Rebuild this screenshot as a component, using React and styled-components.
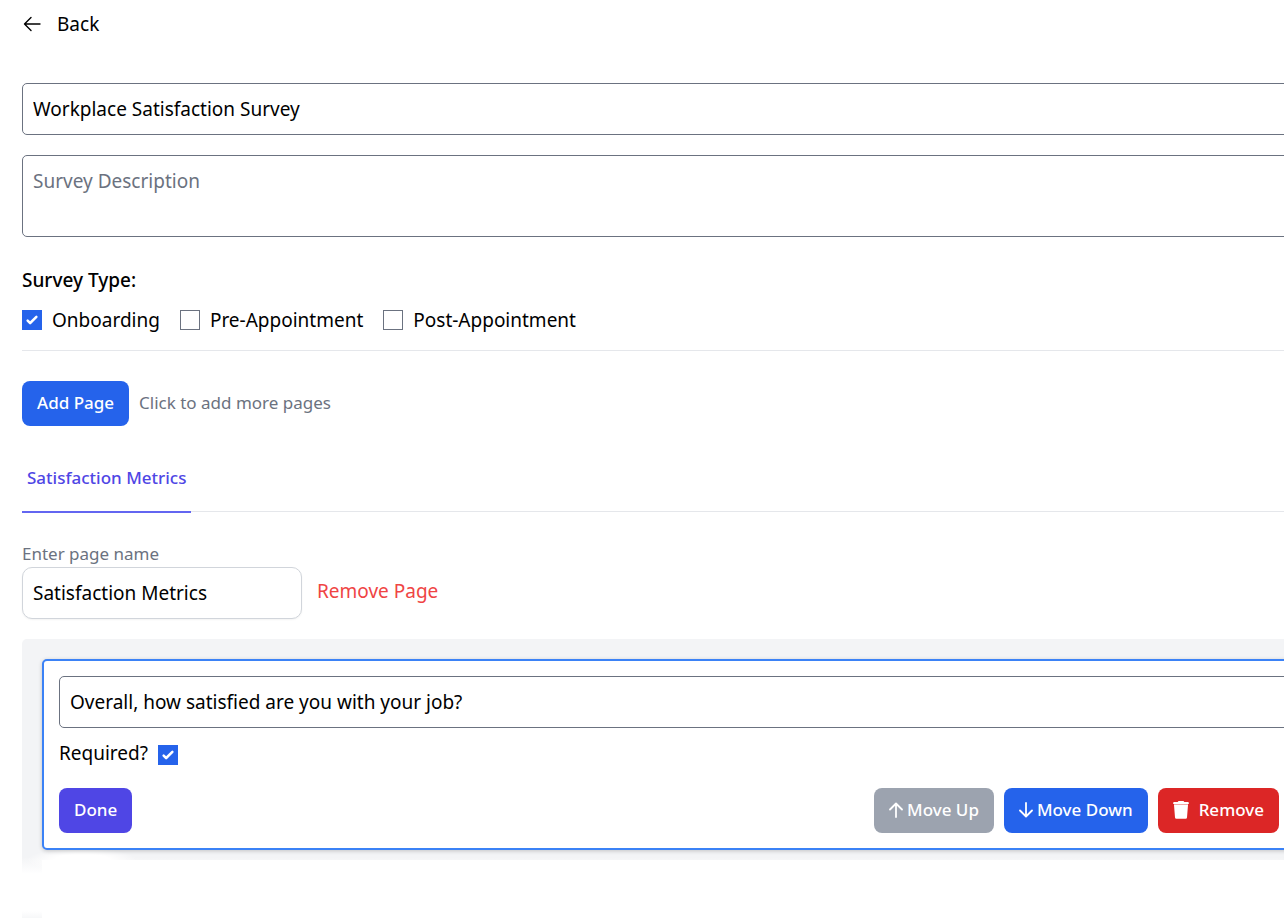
import { useState } from "react";
import styled, { createGlobalStyle } from "styled-components";

const surveyTypes = ["Onboarding", "Pre-Appointment", "Post-Appointment"];

const App = () => {
  const [title, setTitle] = useState("Workplace Satisfaction Survey");
  const [description, setDescription] = useState("");
  const [selected, setSelected] = useState(["Onboarding"]);
  const [pageName, setPageName] = useState("Satisfaction Metrics");
  const [question, setQuestion] = useState(
    "Overall, how satisfied are you with your job?"
  );
  const [required, setRequired] = useState(true);

  const toggleType = (type) => {
    setSelected(
      selected.includes(type)
        ? selected.filter((item) => item !== type)
        : [...selected, type]
    );
  };

  return (
    <>
      <GlobalStyle />
      <Container>
        <BackLink href="#back">
          <BackIcon viewBox="0 0 20 20">
            <path d="M18 10H2.5M9 3.500L2.5 10L9 16.500" />
          </BackIcon>
          Back
        </BackLink>

        <TitleInput
          aria-label="Survey title"
          value={title}
          onChange={(e) => setTitle(e.target.value)}
        />
        <Description
          aria-label="Survey description"
          placeholder="Survey Description"
          value={description}
          onChange={(e) => setDescription(e.target.value)}
        />

        <TypeGroup>
          <TypeTitle>Survey Type:</TypeTitle>
          <TypeList>
            {surveyTypes.map((type) => (
              <CheckLabel key={type}>
                <Checkbox
                  type="checkbox"
                  checked={selected.includes(type)}
                  onChange={() => toggleType(type)}
                />
                {type}
              </CheckLabel>
            ))}
          </TypeList>
        </TypeGroup>

        <AddRow>
          <Button $color="#2563eb">Add Page</Button>
          <Hint>Click to add more pages</Hint>
        </AddRow>

        <Tabs>
          <Tab href="#metrics">{pageName}</Tab>
        </Tabs>

        <PageLabel htmlFor="page-name">Enter page name</PageLabel>
        <PageRow>
          <PageInput
            id="page-name"
            value={pageName}
            onChange={(e) => setPageName(e.target.value)}
          />
          <RemovePage>Remove Page</RemovePage>
        </PageRow>

        <Panel>
          <Card>
            <Field
              aria-label="Question"
              value={question}
              onChange={(e) => setQuestion(e.target.value)}
            />
            <RequiredLabel>
              Required?
              <Checkbox
                type="checkbox"
                checked={required}
                onChange={(e) => setRequired(e.target.checked)}
              />
            </RequiredLabel>
            <Actions>
              <Button $color="#4f46e5">Done</Button>
              <ActionGroup>
                <Button $color="#9ca3af">
                  <ArrowIcon viewBox="0 0 14 16">
                    <path d="M7 15V2M1 7.5L7 1.5L13 7.5" />
                  </ArrowIcon>
                  Move Up
                </Button>
                <Button $color="#2563eb">
                  <ArrowIcon viewBox="0 0 14 16">
                    <path d="M7 1V14M1 8.5L7 14.5L13 8.5" />
                  </ArrowIcon>
                  Move Down
                </Button>
                <Button $color="#dc2626">
                  <TrashIcon viewBox="0 0 16 18">
                    <path d="M5.5 0h5l.8 1H15q.8 0 .8 1v1H.2V2q0-1 .8-1h3.7z" />
                    <path d="M1 4h14l-1 12.500q-.1 1.300-1.400 1.300H3.400q-1.300 0-1.400-1.300z" />
                    <path d="M1 3h14v1H1z" fillOpacity="0.6" />
                  </TrashIcon>
                  Remove
                </Button>
              </ActionGroup>
            </Actions>
          </Card>
          <NextCard />
        </Panel>
      </Container>
    </>
  );
};

export default App;

const GlobalStyle = createGlobalStyle`
  * {
    box-sizing: border-box;
  }

  body {
    margin: 0;
    background-color: #fff;
    color: #000;
    font-family: "Noto Sans", sans-serif;
    font-size: 19px;
    line-height: 30px;
    overflow-x: hidden;
  }

  input, textarea, button {
    font: inherit;
    color: inherit;
  }
`;

/* the editor runs wider than the window on the right */
const Container = styled.main`
  display: flex;
  flex-direction: column;
  align-items: stretch;
  margin-right: -52px;
  padding: 9px 0 0 22px;
`;

const BackLink = styled.a`
  display: flex;
  align-items: center;
  align-self: flex-start;
  gap: 15px;
  color: #000;
  text-decoration: none;
`;

const BackIcon = styled.svg`
  width: 20px;
  height: 20px;
  fill: none;
  stroke: #000;
  stroke-width: 1.4;
  stroke-linecap: round;
  stroke-linejoin: round;
`;

const Field = styled.input`
  display: block;
  width: 100%;
  height: 52px;
  padding: 10px;
  border: 1px solid #6b7280;
  border-radius: 5px;
  background-color: #fff;
`;

const TitleInput = styled(Field)`
  margin-top: 44px;
`;

const Description = styled.textarea`
  display: block;
  height: 82px;
  margin-top: 20px;
  padding: 10px;
  border: 1px solid #6b7280;
  border-radius: 5px;
  resize: none;

  &::placeholder {
    color: #6b7280;
    opacity: 1;
  }
`;

const TypeGroup = styled.section`
  margin-top: 28px;
  padding-bottom: 15px;
  border-bottom: 1px solid #e5e7eb;
`;

const TypeTitle = styled.h2`
  margin: 0 0 10px;
  font-size: 19px;
  font-weight: 500;
`;

const TypeList = styled.div`
  display: flex;
  gap: 20px;
`;

const CheckLabel = styled.label`
  display: flex;
  align-items: center;
  gap: 10px;
`;

const Checkbox = styled.input`
  appearance: none;
  flex: none;
  width: 20px;
  height: 20px;
  margin: 0;
  border: 1px solid #6b7280;
  background-color: #fff;

  &:checked {
    border-color: #2563eb;
    background: #2563eb
      url("data:image/svg+xml,%3Csvg viewBox='0 0 16 16' fill='white' xmlns='http://www.w3.org/2000/svg'%3E%3Cpath d='M12.207 4.793a1 1 0 010 1.414l-5 5a1 1 0 01-1.414 0l-2-2a1 1 0 011.414-1.414L6.500 9.086l4.293-4.293a1 1 0 011.414 0z'/%3E%3C/svg%3E")
      center / 20px 20px no-repeat;
  }
`;

const AddRow = styled.div`
  display: flex;
  align-items: center;
  gap: 10px;
  margin-top: 30px;
`;

const Button = styled.button`
  display: flex;
  align-items: center;
  height: 45px;
  padding: 0 15px 2px;
  border: none;
  border-radius: 8px;
  background-color: ${({ $color }) => $color};
  color: #fff;
  font-size: 17px;
  font-weight: 500;
  cursor: pointer;
`;

const Hint = styled.span`
  padding-bottom: 2px;
  color: #6b7280;
  font-size: 17px;
`;

const Tabs = styled.nav`
  display: flex;
  margin-top: 30px;
  border-bottom: 1px solid #e5e7eb;
`;

const Tab = styled.a`
  margin-bottom: -2px;
  padding: 9px 5px 21px;
  border-bottom: 2px solid #6366f1;
  color: #4f46e5;
  font-size: 17px;
  font-weight: 500;
  line-height: 25px;
  text-decoration: none;
`;

const PageLabel = styled.label`
  margin-top: 29px;
  padding-bottom: 1px;
  color: #6b7280;
  font-size: 17px;
  line-height: 25px;
`;

const PageRow = styled.div`
  display: flex;
  align-items: center;
  gap: 15px;
`;

const PageInput = styled(Field)`
  width: 280px;
  border-color: #d1d5db;
  border-radius: 10px;
  box-shadow: 0 1px 2px rgba(0, 0, 0, 0.05);
`;

const RemovePage = styled.button`
  padding: 0 0 4px;
  border: none;
  background: none;
  color: #ef4444;
  cursor: pointer;
`;

const Panel = styled.section`
  display: flex;
  flex-direction: column;
  gap: 10px;
  margin-top: 20px;
  padding: 20px 20px 0;
  border-radius: 5px 5px 0 0;
  background:
    radial-gradient(55px 12px at 60px 221px, #fff 50%, transparent),
    linear-gradient(#f3f4f6 218px, #fff 235px, #fff 272px, #f3f4f6 282px);
`;

const Card = styled.article`
  padding: 15px;
  border: 2px solid #3b82f6;
  border-radius: 5px;
  background-color: #fff;
  box-shadow: 0 1px 4px rgba(0, 0, 0, 0.2);
`;

const NextCard = styled.div`
  height: 58px;
  background-color: #fff;
`;

const RequiredLabel = styled.label`
  display: block;
  width: fit-content;
  margin-top: 10px;

  ${Checkbox} {
    margin-left: 10px;
    vertical-align: middle;
  }
`;

const Actions = styled.div`
  display: flex;
  justify-content: space-between;
  margin-top: 20px;
  padding-right: 20px;
`;

const ActionGroup = styled.div`
  display: flex;
  gap: 10px;
`;

const ArrowIcon = styled.svg`
  width: 14px;
  height: 16px;
  margin-right: 4px;
  fill: none;
  stroke: #fff;
  stroke-width: 1.8;
  stroke-linecap: round;
  stroke-linejoin: round;
`;

const TrashIcon = styled.svg`
  width: 16px;
  height: 18px;
  margin-right: 10px;
  fill: #fff;
`;
